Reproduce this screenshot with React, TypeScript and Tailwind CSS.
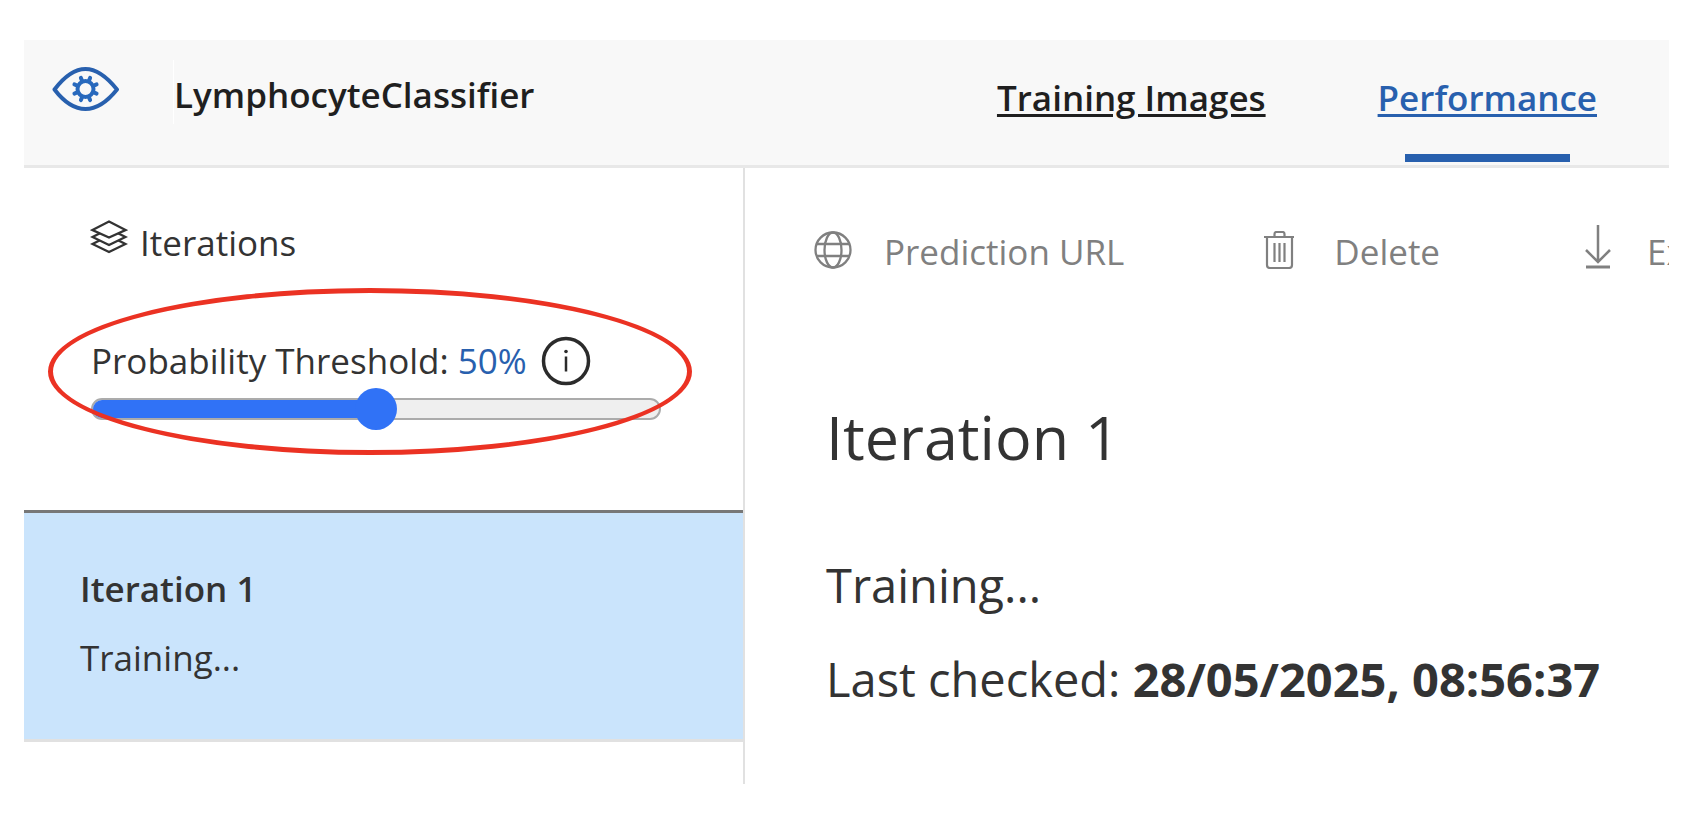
import { useState } from "react";

function VisionLogo() {
  return (
    <svg viewBox="0 0 68 46" className="h-[46px] w-[68px] shrink-0" fill="none" aria-hidden="true">
      <path
        d="M2.500 23.500C12 11 22 3 33.500 3C45 3 55 11 65 23.500C55 36 45 43 33.500 43C22 43 12 36 2.500 23.500Z"
        stroke="#2860ae"
        strokeWidth="4"
        strokeLinejoin="round"
      />
      <g transform="translate(33.500 23)" stroke="#2869bd">
        <circle r="8" strokeWidth="4" />
        {[22.5, 67.5, 112.5, 157.5, 202.5, 247.5, 292.5, 337.5].map((angle) => (
          <path key={angle} d="M0 -9V-12" strokeWidth="4" strokeLinecap="round" transform={`rotate(${angle})`} />
        ))}
      </g>
    </svg>
  );
}

function LayersIcon() {
  return (
    <svg viewBox="0 0 38 34" className="h-[34px] w-[38px] shrink-0" fill="none" stroke="#333" strokeWidth="2.300" aria-hidden="true">
      <path d="M19 1.500L35.500 10L19 17.500L2.500 10Z" />
      <path d="M9.500 13.500L2.500 17L19 25L35.500 17L28.500 13.500" />
      <path d="M9.500 20.500L2.500 24L19 32L35.500 24L28.500 20.500" />
    </svg>
  );
}

function GlobeIcon() {
  return (
    <svg viewBox="0 0 38 38" className="mb-[7px] size-[38px] shrink-0" fill="none" stroke="#808080" strokeWidth="2.300" aria-hidden="true">
      <circle cx="19" cy="19" r="17.500" />
      <ellipse cx="19" cy="19" rx="8.500" ry="17.500" />
      <path d="M2.500 13H35.500M2.500 25H35.500" />
    </svg>
  );
}

function TrashIcon() {
  return (
    <svg viewBox="0 0 30 38" className="mb-[7px] h-[38px] w-[30px] shrink-0" fill="none" stroke="#808080" strokeWidth="2.200" aria-hidden="true">
      <path d="M0 6H30M10.500 6V3Q10.500 1 12.500 1H18.500Q20.500 1 20.500 3V6" />
      <path d="M3 6V34Q3 37 6 37H25Q28 37 28 34V6" />
      <path d="M10.500 12V31M15.500 12V31M20.500 12V31" />
    </svg>
  );
}

function DownloadIcon() {
  return (
    <svg viewBox="0 0 26 44" className="mb-[7px] h-[44px] w-[26px] shrink-0" fill="none" stroke="#808080" strokeWidth="2.500" aria-hidden="true">
      <path d="M13 0V37M1 25L13 37L25 25" />
      <path d="M1 42H25" strokeWidth="3" />
    </svg>
  );
}

function InfoIcon() {
  return (
    <svg viewBox="0 0 50 50" className="size-[50px]" fill="none" stroke="#2b2b2b" aria-hidden="true">
      <circle cx="25" cy="25" r="22.500" strokeWidth="3.500" />
      <path d="M25 20.500V35.500" strokeWidth="2.500" />
      <circle cx="25" cy="15.500" r="1.800" fill="#2b2b2b" stroke="none" />
    </svg>
  );
}

export default function App() {
  const [threshold, setThreshold] = useState(50);

  return (
    <div className="min-h-screen bg-white pt-10 pr-[29px] pb-[29px] pl-6 font-['Open_Sans',sans-serif] text-[35px] leading-[48px] text-[#333]">
      <header className="flex items-start border-b-[3px] border-[#e8e8e8] bg-[#f8f8f8] pl-7">
        <div className="pt-[26px]">
          <VisionLogo />
        </div>
        <h1 className="mt-5 ml-[53px] border-l border-white pt-1.5 leading-[58px] font-semibold text-[#1f1f1f]">
          LymphocyteClassifier
        </h1>
        <nav className="ml-auto flex gap-28 pr-[72px] font-semibold text-[#1f1f1f]">
          <a href="#images" className="pt-[34px] underline decoration-[3px] underline-offset-[3px]">
            Training Images
          </a>
          <a
            href="#performance"
            aria-current="page"
            className="flex flex-col items-center pt-[34px] pb-[3px] text-[#2860ae] underline decoration-[3px] underline-offset-[3px]"
          >
            Performance
            <span className="mt-8 h-2 w-3/4 bg-[#2860ae]" />
          </a>
        </nav>
      </header>

      <div className="grid grid-cols-[721px_minmax(0,1fr)]">
        <aside className="border-r-2 border-[#e1e1e1]">
          <h2 className="flex items-start gap-3 pt-[51px] pl-[66px]">
            <span className="pt-px">
              <LayersIcon />
            </span>
            Iterations
          </h2>

          <section className="relative mt-14 pr-[82px] pb-[90px] pl-[67px]">
            <div className="flex h-[75px] items-center">
              <label htmlFor="threshold" className="whitespace-nowrap">
                Probability Threshold: <span className="text-[#2860ae]">{threshold}%</span>
              </label>
              <button type="button" aria-label="About the probability threshold" className="ml-3.5">
                <InfoIcon />
              </button>
            </div>
            <div className="relative flex h-[22px] items-center">
              <div className="h-[22px] w-full overflow-hidden rounded-full border-2 border-[#ababab] bg-[#efefef]">
                <div className="h-full bg-[#3072f6]" style={{ width: `${threshold}%` }} />
              </div>
              <input
                id="threshold"
                type="range"
                min={0}
                max={100}
                value={threshold}
                onChange={(e) => setThreshold(Number(e.target.value))}
                className="absolute inset-x-0 h-[42px] w-full appearance-none bg-transparent [&::-webkit-slider-thumb]:size-[42px] [&::-webkit-slider-thumb]:appearance-none [&::-webkit-slider-thumb]:rounded-full [&::-webkit-slider-thumb]:bg-[#3072f6]"
              />
            </div>
            <div className="pointer-events-none absolute -top-[35px] right-[51px] left-6 h-[167px] rounded-[50%] border-[5px] border-[#eb3223]" />
          </section>

          <button
            type="button"
            className="flex w-full flex-col items-start gap-[21px] border-t-[3px] border-b-[3px] border-t-[#777] border-b-[#e1e1e1] bg-[#cae4fc] pt-[52px] pb-[57px] pl-14"
          >
            <span className="font-semibold">Iteration 1</span>
            <span>Training...</span>
          </button>
          <div className="h-[42px]" />
        </aside>

        <main className="overflow-hidden pl-[69px]">
          <div className="flex items-end pt-[57px] whitespace-nowrap text-[#808080]">
            <button type="button" className="flex shrink-0 items-end gap-8">
              <GlobeIcon />
              Prediction URL
            </button>
            <button type="button" className="ml-[140px] flex shrink-0 items-end gap-10">
              <TrashIcon />
              Delete
            </button>
            <button type="button" className="ml-[145px] flex shrink-0 items-end gap-9">
              <DownloadIcon />
              Export
            </button>
          </div>
          <div className="pl-3">
            <h2 className="mt-[121px] text-[61px] leading-[80px]">Iteration 1</h2>
            <p className="mt-[76px] text-[47px] leading-[64px]">Training...</p>
            <p className="mt-[30px] text-[47px] leading-[64px]">
              Last checked: <strong className="font-bold">28/05/2025, 08:56:37</strong>
            </p>
          </div>
        </main>
      </div>
    </div>
  );
}
